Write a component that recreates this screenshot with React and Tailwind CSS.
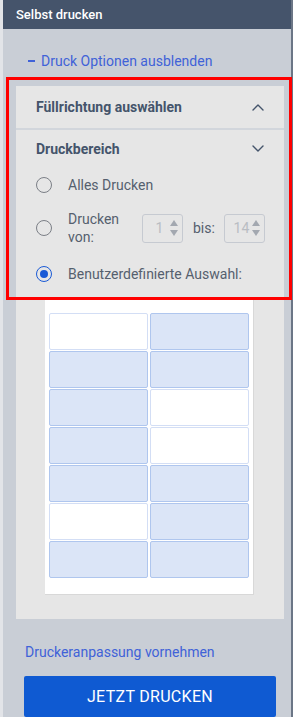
import React from 'react';

const cells = [
  [false, true],
  [true, true],
  [true, false],
  [true, false],
  [true, true],
  [false, true],
  [true, true],
];

function Chevron({ up }) {
  return (
    <svg width="12" height="8" viewBox="0 0 12 8" fill="none">
      <path
        d={up ? 'M1 7 L6 2 L11 7' : 'M1 1 L6 6 L11 1'}
        stroke="#44546b"
        strokeWidth="1.4"
        strokeLinecap="round"
        strokeLinejoin="round"
      />
    </svg>
  );
}

function Radio({ checked }) {
  return (
    <div
      className={`w-[16px] h-[16px] shrink-0 rounded-full border-[1.5px] flex items-center justify-center ${
        checked ? 'border-[#1a5ad6]' : 'border-[#7b7f86]'
      }`}
    >
      {checked && <div className="w-[8px] h-[8px] rounded-full bg-[#1a5ad6]" />}
    </div>
  );
}

function Spinner({ value }) {
  return (
    <div className="w-[41px] h-[29px] shrink-0 border border-[#c6cad1] rounded-[3px] flex items-center pr-[4px]">
      <span className="flex-1 pl-[6px] text-center text-[14px] text-[#b9bdc3]">{value}</span>
      <svg width="8" height="20" viewBox="0 0 8 20">
        <path d="M0 8 L4 2 L8 8 Z" fill="#a3a8b0" />
        <path d="M0 12 L4 18 L8 12 Z" fill="#a3a8b0" />
      </svg>
    </div>
  );
}

export default function App() {
  return (
    <div className="w-[293px] h-[722px] bg-white relative font-['Roboto',sans-serif]">
      <div className="h-[717px] flex">
        <div className="w-[3px] bg-[#e2e4e8]" />
        <div className="flex-1 bg-[#c9ced6] flex flex-col">
          {/* Header */}
          <div className="h-[29px] bg-[#45546b] flex items-center pl-[13px] text-[13px] font-medium text-white">
            Selbst drucken
          </div>

          <div className="mt-[22px] pl-[25px] flex items-center h-[20px] text-[14px] text-[#4062d8]">
            <span className="w-[7px] h-[2px] bg-[#4062d8] mr-[6px]" />
            Druck Optionen ausblenden
          </div>

          {/* Options panel */}
          <div className="mt-[15px] ml-[13px] mr-[7px] bg-[#e6e6e6] flex flex-col">
            <div className="h-[42px] flex items-center justify-between pl-[20px] pr-[20px]">
              <span className="text-[14px] font-bold text-[#44546b]">Füllrichtung auswählen</span>
              <Chevron up />
            </div>
            <div className="h-[2px] bg-[#d2d6dc]" />
            <div className="h-[38px] flex items-center justify-between pl-[20px] pr-[20px]">
              <span className="text-[14px] font-bold text-[#44546b]">Druckbereich</span>
              <Chevron />
            </div>

            <div className="h-[34px] flex items-center pl-[20px] gap-[16px]">
              <Radio />
              <span className="text-[14px] text-[#555f6e]">Alles Drucken</span>
            </div>
            <div className="h-[52px] flex items-center pl-[20px]">
              <Radio />
              <span className="ml-[16px] w-[74px] shrink-0 text-[14px] leading-[18px] text-[#555f6e]">
                Drucken
                <br />
                von:
              </span>
              <Spinner value="1" />
              <span className="ml-[10px] mr-[9px] text-[14px] text-[#555f6e]">bis:</span>
              <Spinner value="14" />
            </div>
            <div className="h-[40px] flex items-center pl-[20px] gap-[16px]">
              <Radio checked />
              <span className="text-[14px] text-[#555f6e]">Benutzerdefinierte Auswahl:</span>
            </div>

            {/* Label sheet preview */}
            <div className="mt-[3px] ml-[29px] mr-[30px] bg-white border-r border-b border-[#d8d8d8] pt-[16px] pb-[16px] pl-[4px] pr-[4px]">
              <div className="grid grid-cols-2 gap-x-[2px] gap-y-px">
                {cells.flat().map((on, i) => (
                  <div
                    key={i}
                    className={`h-[37px] rounded-[2px] border ${
                      on ? 'bg-[#dbe5f7] border-[#afc6ee]' : 'bg-white border-[#d3def5]'
                    }`}
                  />
                ))}
              </div>
            </div>
            <div className="h-[24px]" />
          </div>

          <div className="mt-[23px] pl-[22px] h-[20px] flex items-center text-[14px] text-[#4062d8]">
            Druckeranpassung vornehmen
          </div>

          <button className="mt-[14px] ml-[21px] w-[252px] h-[41px] bg-[#0f5ad2] rounded-[2px] text-white text-[16px] tracking-[0.3px]">
            JETZT DRUCKEN
          </button>
        </div>
        <div className="w-[2px] bg-[#6b7686]" />
      </div>

      {/* Red highlight annotation */}
      <div className="absolute left-[6px] top-[77px] w-[286px] h-[223px] border-[3px] border-[#ff0000] pointer-events-none" />
    </div>
  );
}
